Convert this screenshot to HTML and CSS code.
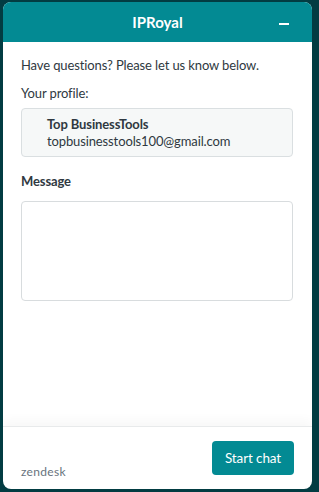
FILE: index.html
```html
<!DOCTYPE html>
<html>
<head>
<meta charset="utf-8">
<link rel="stylesheet" href="styles.css">
</head>
<body>
<div class="widget">
  <header class="header">
    <span class="title">IPRoyal</span>
    <span class="minimize"></span>
  </header>
  <main class="content">
    <p class="intro">Have questions? Please let us know below.</p>
    <p class="label">Your profile:</p>
    <div class="profile">
      <div class="name">Top BusinessTools</div>
      <div class="email">topbusinesstools100@gmail.com</div>
    </div>
    <p class="field-label">Message</p>
    <div class="textarea"></div>
  </main>
  <footer class="footer">
    <span class="brand">zendesk</span>
    <button class="start">Start chat</button>
  </footer>
</div>
</body>
</html>
```
FILE: styles.css
```css
html, body { margin: 0; padding: 0; }
body {
  background: #023c42;
  width: 319px;
  height: 492px;
  font-family: "Lato", "Noto Sans", sans-serif;
  color: #2f3941;
  overflow: hidden;
}
.widget {
  margin: 2px 7px 3px 3px;
  height: 487px;
  background: #fff;
  border-radius: 8px;
  display: flex;
  flex-direction: column;
  overflow: hidden;
}
.header {
  height: 40px;
  flex: none;
  background: #038a93;
  display: flex;
  align-items: center;
  justify-content: center;
  position: relative;
  color: #fff;
}
.title { font-weight: 700; font-size: 15px; }
.minimize {
  position: absolute;
  right: 23px;
  top: 21px;
  width: 10px;
  height: 2px;
  background: #fff;
}
.content {
  flex: 1;
  padding: 14px 19px 0 18px;
  font-size: 13px;
  letter-spacing: -0.12px;
}
.intro { margin: 0; line-height: 18px; }
.label { margin: 10px 0 0; line-height: 18px; }
.profile {
  margin-top: 6px;
  height: 49px;
  box-sizing: border-box;
  border: 1px solid #dadfe1;
  background: #f6f8f8;
  border-radius: 4px;
  padding: 7px 0 0 25px;
  line-height: 17px;
  color: #2f3941;
}
.name { font-weight: 700; }
.field-label { margin: 15px 0 0; font-weight: 700; line-height: 18px; }
.textarea {
  margin-top: 11px;
  height: 100px;
  box-sizing: border-box;
  border: 1px solid #d8dcde;
  border-radius: 4px;
}
.footer {
  flex: none;
  height: 63px;
  border-top: 1px solid #e8eaeb;
  box-shadow: 0 -6px 10px rgba(0,0,0,0.03);
  display: flex;
  align-items: flex-start;
  justify-content: space-between;
  padding: 14px 18px 0 18px;
  box-sizing: border-box;
}
.brand {
  margin-top: 23px;
  font-size: 12px;
  color: #68737d;
  letter-spacing: 0.3px;
}
.start {
  width: 82px;
  height: 34px;
  background: #038a93;
  color: #fff;
  border: none;
  border-radius: 4px;
  font-family: inherit;
  font-size: 13.5px;
  letter-spacing: -0.1px;
  padding: 0;
}
```
